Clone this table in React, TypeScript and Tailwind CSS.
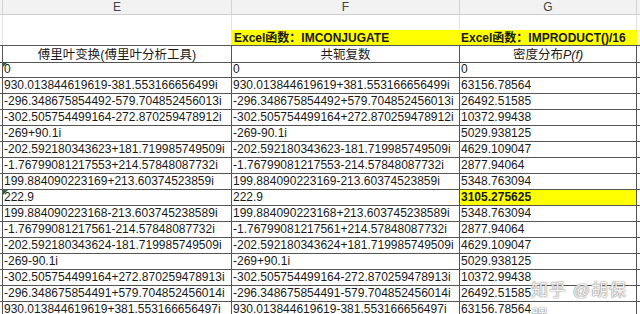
import React from 'react';

const rows = [
  { e: '0', f: '0', g: '0' },
  { e: '930.013844619619-381.553166656499i', f: '930.013844619619+381.553166656499i', g: '63156.78564' },
  { e: '-296.348675854492-579.704852456013i', f: '-296.348675854492+579.704852456013i', g: '26492.51585' },
  { e: '-302.505754499164-272.870259478912i', f: '-302.505754499164+272.870259478912i', g: '10372.99438' },
  { e: '-269+90.1i', f: '-269-90.1i', g: '5029.938125' },
  { e: '-202.592180343623+181.719985749509i', f: '-202.592180343623-181.719985749509i', g: '4629.109047' },
  { e: '-1.76799081217553+214.57848087732i', f: '-1.76799081217553-214.57848087732i', g: '2877.94064' },
  { e: '199.884090223169+213.60374523859i', f: '199.884090223169-213.60374523859i', g: '5348.763094' },
  { e: '222.9', f: '222.9', g: '3105.275625', mark: true },
  { e: '199.884090223168-213.603745238589i', f: '199.884090223168+213.603745238589i', g: '5348.763094' },
  { e: '-1.76799081217561-214.57848087732i', f: '-1.76799081217561+214.57848087732i', g: '2877.94064' },
  { e: '-202.592180343624-181.719985749509i', f: '-202.592180343624+181.719985749509i', g: '4629.109047' },
  { e: '-269-90.1i', f: '-269+90.1i', g: '5029.938125' },
  { e: '-302.505754499164+272.870259478913i', f: '-302.505754499164-272.870259478913i', g: '10372.99438' },
  { e: '-296.348675854491+579.704852456014i', f: '-296.348675854491-579.704852456014i', g: '26492.51585' },
  { e: '930.013844619619+381.553166656497i', f: '930.013844619619-381.553166656497i', g: '63156.78564' },
];

// little green error marker in the top-left corner of a cell
const Flag = () => (
  <span className="absolute left-0 top-0 w-0 h-0 border-t-[5px] border-r-[5px] border-t-[#1d6b3a] border-r-transparent" />
);

export default function App() {
  return (
    <div
      className="w-[640px] h-[314px] overflow-hidden bg-white relative text-[#1a1a1a] text-[12px]"
      style={{ fontFamily: '"Liberation Sans", "Noto Sans CJK SC", sans-serif' }}
    >
      {/* column letters */}
      <div className="flex h-[15px] bg-[#f2f2f2] border-b border-[#cfcfcf] text-[#444]">
        <div className="w-[3px] border-r border-[#d4d4d4]" />
        <div className="w-[229px] border-r border-[#d4d4d4] flex items-center justify-center">E</div>
        <div className="w-[228px] border-r border-[#d4d4d4] flex items-center justify-center">F</div>
        <div className="w-[177px] border-r border-[#d4d4d4] flex items-center justify-center">G</div>
        <div className="flex-1" />
      </div>

      {/* empty row */}
      <div className="flex h-[15px]">
        <div className="w-[3px] border-r border-[#e2e2e2]" />
        <div className="w-[229px] border-r border-[#e2e2e2]" />
        <div className="w-[228px] border-r border-[#e2e2e2]" />
        <div className="w-[177px] border-r border-[#e2e2e2]" />
      </div>

      {/* function row */}
      <div className="flex h-[15px] font-bold">
        <div className="w-[3px] border-r border-[#e2e2e2]" />
        <div className="w-[229px] border-r border-[#e2e2e2]" />
        <div className="w-[228px] bg-[#ffff00] flex items-end pl-[2px] leading-[14px]">Excel函数：IMCONJUGATE</div>
        <div className="w-[177px] bg-[#ffff00] flex items-end pl-[1px] leading-[14px] whitespace-nowrap">Excel函数：IMPRODUCT()/16</div>
        <div className="flex-1 bg-[#fbf7c8]" />
      </div>

      {/* titles */}
      <div className="flex h-[16px] border-y border-[#555] box-content -mb-px">
        <div className="w-[3px] border-r border-[#555]" />
        <div className="w-[229px] border-r border-[#555] flex items-end justify-center leading-[14px] text-[12.5px]">傅里叶变换(傅里叶分析工具)</div>
        <div className="w-[228px] border-r border-[#555] flex items-end justify-center leading-[14px] text-[12.5px]">共轭复数</div>
        <div className="w-[177px] border-r border-[#555] flex items-end justify-center leading-[14px] text-[12.5px]">
          密度分布<span className="italic">P(f)</span>
        </div>
      </div>

      {/* data */}
      {rows.map((r, i) => (
        <div key={i} className="flex h-[16px] border-b border-[#555] whitespace-nowrap">
          <div className="w-[3px] border-r border-[#555]" />
          <div className="w-[229px] border-r border-[#555] relative flex items-end pl-[1px] leading-[15px]">
            {(i === 0 || r.mark) && <Flag />}
            {r.e}
          </div>
          <div className="w-[228px] border-r border-[#555] flex items-end pl-[1px] leading-[15px]">{r.f}</div>
          <div
            className={`w-[177px] border-r border-[#555] flex items-end pl-[1px] leading-[15px] ${
              r.mark ? 'bg-[#ffff00] font-bold' : ''
            }`}
          >
            {r.g}
          </div>
        </div>
      ))}

      {/* watermark */}
      <div className="absolute left-[531px] top-[278px] text-[17px] text-[#f4f4f4] tracking-[1px] [text-shadow:0_0_1px_#777,0_0_2px_#999]">
        知乎 @胡保强
      </div>
    </div>
  );
}
